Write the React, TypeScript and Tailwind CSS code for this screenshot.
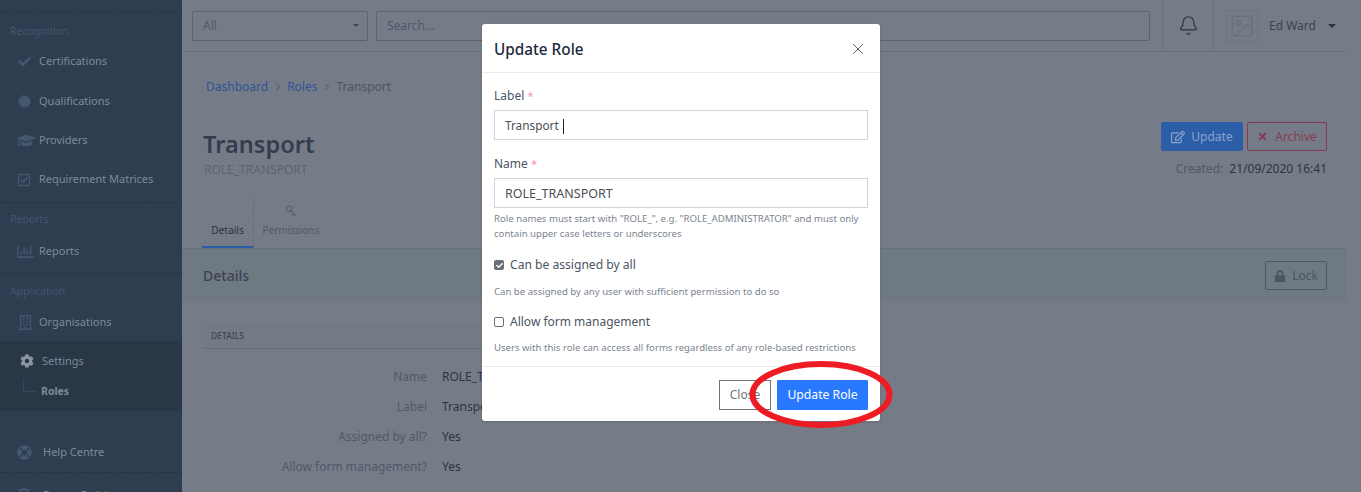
import type { ReactNode } from "react";
import { Bell, Image, X, ChevronRight, Key } from "lucide-react";
import {
  FaCheck,
  FaCertificate,
  FaGraduationCap,
  FaRegCheckSquare,
  FaRegChartBar,
  FaRegBuilding,
  FaCog,
  FaLifeRing,
  FaTrash,
  FaRegEdit,
  FaTimes,
  FaLock,
} from "react-icons/fa";

function NavHeading({ children }: { children: string }) {
  return <div className="h-[18px] pl-[10px] text-[10.5px] leading-[18px] text-[#43576e]">{children}</div>;
}

function NavItem({ icon, label }: { icon: ReactNode; label: string }) {
  return (
    <div className="flex h-[39px] items-center pl-[17px] text-[11px] text-[#7e8b99]">
      <span className="flex w-[22px] shrink-0 items-center text-[#43576e]">{icon}</span>
      {label}
    </div>
  );
}

function Row({ label, value }: { label: string; value: string }) {
  return (
    <div className="flex h-[30px] items-center text-[12px]">
      <div className="w-[225px] text-right text-[#50586a]">{label}</div>
      <div className="ml-[15px] text-[#2b3445]">{value}</div>
    </div>
  );
}

function Sidebar() {
  return (
    <aside className="h-[492px] w-[182px] shrink-0 overflow-hidden bg-[#2e3d4f]">
      <div className="mt-[12px] border-t border-dashed border-[#263343]" />
      <div className="mt-[9px]"><NavHeading>Recognition</NavHeading></div>
      <div className="mt-[2px]">
        <NavItem icon={<FaCheck size={13} className="ml-[1px]" />} label="Certifications" />
        <div className="mt-[1px]">
          <NavItem icon={<FaCertificate size={13} className="ml-[1px]" />} label="Qualifications" />
          <NavItem icon={<FaGraduationCap size={19} />} label="Providers" />
          <NavItem icon={<FaRegCheckSquare size={14} />} label="Requirement Matrices" />
        </div>
      </div>
      <div className="mt-[3px] border-t border-dashed border-[#263343]" />
      <div className="mt-[7px]"><NavHeading>Reports</NavHeading></div>
      <div className="mt-[4px]">
        <NavItem icon={<FaRegChartBar size={17} />} label="Reports" />
      </div>
      <div className="mt-[2px] border-t border-dashed border-[#263343]" />
      <div className="mt-[8px]"><NavHeading>Application</NavHeading></div>
      <div className="mt-[3px] h-[38px]">
        <NavItem icon={<FaRegBuilding size={15} className="ml-[1px]" />} label="Organisations" />
      </div>
      <div className="h-[70px] bg-[#293747] pt-[2px]">
        <div className="flex h-[36px] items-center pl-[20px] text-[11px] text-[#7e8b99]">
          <FaCog size={14} className="mr-[8px] text-[#8b95a1]" />
          Settings
        </div>
        <div className="relative mt-[1px] flex h-[24px] items-center pl-[41px] text-[10.5px] font-bold text-[#7e8b99]">
          <span className="absolute -top-[2px] left-[23px] h-[14px] w-[14px] border-b border-l border-[#36465a]" />
          Roles
        </div>
      </div>
      <div className="mt-[22px] flex h-[39px] items-center pl-[17px] text-[11px] text-[#7e8b99]">
        <FaLifeRing size={15} className="mr-[11px] text-[#43576e]" />
        Help Centre
      </div>
      <div className="border-t border-dashed border-[#263343]" />
      <div className="flex h-[44px] items-center pl-[17px] text-[11px] text-[#7e8b99]">
        <FaTrash size={14} className="mr-[12px] text-[#43576e]" />
        Report Builder
      </div>
    </aside>
  );
}

function Main() {
  return (
    <main className="flex h-[492px] min-w-0 flex-1 flex-col overflow-hidden bg-[#767c87]">
      <header className="mr-[14px] flex h-[52px] shrink-0 border-b border-[#687079]">
        <div className="flex flex-1 items-center gap-[8px] pl-[10px] pr-[12px]">
          <div className="flex h-[30px] w-[176px] items-center justify-between rounded-[2px] border border-[#5a6270] pl-[10px] pr-[8px] text-[12px] text-[#4c5a6e]">
            All
            <span className="h-0 w-0 border-x-[3.5px] border-t-[3.5px] border-x-transparent border-t-[#3d4554]" />
          </div>
          <div className="flex h-[30px] flex-1 items-center rounded-[2px] border border-[#5a6270] pl-[10px] text-[12px] text-[#4c5a6e]">Search...</div>
        </div>
        <div className="flex w-[52px] items-center justify-center border-x border-[#687079]">
          <Bell size={21} strokeWidth={1.4} className="text-[#2b3445]" />
        </div>
        <div className="flex w-[133px] items-center pl-[12px]">
          <div className="flex h-[32px] w-[32px] items-center justify-center border border-[#6e747f]">
            <Image size={26} strokeWidth={1.5} className="text-[#6a717c]" />
          </div>
          <span className="ml-[11px] text-[12px] text-[#3b4354]">Ed Ward</span>
          <span className="ml-[12px] h-0 w-0 border-x-[4px] border-t-[4px] border-x-transparent border-t-[#2b3445]" />
        </div>
      </header>
      <div className="flex h-[196px] shrink-0 flex-col">
        <div className="mt-[26px] flex items-center pl-[24px] text-[12px] leading-[18px]">
          <span className="text-[#2e5498]">Dashboard</span>
          <ChevronRight size={12} className="mx-[3.5px] text-[#4c5464]" />
          <span className="text-[#2e5498]">Roles</span>
          <ChevronRight size={12} className="mx-[3.5px] text-[#4c5464]" />
          <span className="text-[#4c5464]">Transport</span>
        </div>
        <div className="mt-[30px] flex justify-between pl-[21px] pr-[34px]">
          <div>
            <div className="text-[23.6px] font-semibold leading-[36px] text-[#343d4d]">Transport</div>
            <div className="pl-[1px] text-[12px] leading-[16px] text-[#5b6472]">ROLE_TRANSPORT</div>
          </div>
          <div className="-mt-[4px] flex flex-col items-end">
            <div className="flex gap-[4px]">
              <div className="flex h-[29px] w-[82px] items-center justify-center gap-[6px] rounded-[2px] bg-[#2c5ea8] text-[12px] text-[#8aa2c9]">
                <FaRegEdit size={14} /> Update
              </div>
              <div className="flex h-[29px] w-[80px] items-center justify-center gap-[7px] rounded-[2px] border border-[#843c52] text-[12px] text-[#843c52]">
                <FaTimes size={11} /> Archive
              </div>
            </div>
            <div className="mt-[9px] text-[12px] leading-[18px] text-[#4f5868]">
              Created: <span className="ml-[3px] text-[#2b3445]">21/09/2020 16:41</span>
            </div>
          </div>
        </div>
        <div className="mt-auto mr-[14px] flex h-[50px] pl-[20px]">
          <div className="flex w-[52px] flex-col items-center justify-end border-r border-dashed border-r-[#666d78] pb-[10px] text-[10.2px] text-[#2b3445] shadow-[inset_0_-2px_0_#2c5ea8]">Details</div>
          <div className="flex w-[74px] flex-col items-center justify-end pb-[10px] text-[10px] text-[#4f5868]">
            <Key size={12} className="mb-[6px] rotate-90 text-[#4f5868]" />
            Permissions
          </div>
        </div>
      </div>
      <div className="mr-[14px] flex h-[54px] shrink-0 items-center justify-between border-t border-[#687079] bg-[#6f7982] pl-[21px] pr-[20px]">
        <span className="text-[14px] font-medium text-[#3b4354]">Details</span>
        <div className="flex h-[29px] w-[62px] items-center justify-center gap-[6px] rounded-[2px] border border-[#4a5566] text-[12px] text-[#4a5566]">
          <FaLock size={12} /> Lock
        </div>
      </div>
      <div className="ml-[20px] mt-[21px] flex h-[26px] w-[400px] shrink-0 items-center border-b border-[#676f79] bg-[#737a84] pl-[9px] pt-[2px] text-[8.5px] font-medium text-[#3b4354]">DETAILS</div>
      <div className="mt-[13px] pl-[20px]">
        <Row label="Name" value="ROLE_TRANSPORT" />
        <Row label="Label" value="Transport" />
        <Row label="Assigned by all?" value="Yes" />
        <Row label="Allow form management?" value="Yes" />
      </div>
    </main>
  );
}

function Modal() {
  return (
    <div className="absolute left-[482px] top-[24px] flex h-[397px] w-[398px] flex-col rounded-[3px] bg-white shadow-sm">
      <div className="flex h-[49px] shrink-0 items-center justify-between border-b border-[#e9ecef] pl-[12px] pr-[13px] pt-[2px]">
        <span className="text-[15.3px] font-medium text-[#212a3a]">Update Role</span>
        <X size={18} strokeWidth={1.3} className="text-[#555b66]" />
      </div>
      <div className="flex flex-1 flex-col px-[12px]">
        <div className="mt-[14px] text-[12px] leading-[18px] text-[#4b5563]">Label <span className="text-[11px] text-[#f48fb1]">*</span></div>
        <div className="mt-[5px] flex h-[30px] items-center border border-[#ced4da] pl-[10px] pt-[2px] text-[11.8px] text-[#495057]">
          Transport <span className="ml-[4px] h-[15px] w-px bg-[#222]" />
        </div>
        <div className="mt-[15px] text-[12px] leading-[18px] text-[#4b5563]">Name <span className="text-[11px] text-[#f48fb1]">*</span></div>
        <div className="mt-[5px] flex h-[30px] items-center border border-[#ced4da] pl-[10px] pt-[3px] text-[12.5px] text-[#495057]">ROLE_TRANSPORT</div>
        <p className="mt-[3px] text-[9.6px] leading-[15px] text-[#7b8490]">
          Role names must start with "ROLE_", e.g. "ROLE_ADMINISTRATOR" and must only contain upper case letters or underscores
        </p>
        <label className="mt-[15px] flex h-[18px] items-center text-[12.1px] text-[#4b5563]">
          <span className="mr-[6px] flex h-[10px] w-[10px] items-center justify-center rounded-[2px] bg-[#6b6f76]">
            <FaCheck size={7} className="text-white" />
          </span>
          Can be assigned by all
        </label>
        <p className="mt-[10px] text-[9.6px] leading-[15px] text-[#7b8490]">Can be assigned by any user with sufficient permission to do so</p>
        <label className="mt-[14px] flex h-[18px] items-center text-[12px] text-[#4b5563]">
          <span className="mr-[6px] h-[10px] w-[10px] rounded-[2px] border border-[#6b6f76]" />
          Allow form management
        </label>
        <p className="mt-[9px] text-[9.6px] leading-[15px] text-[#7b8490]">Users with this role can access all forms regardless of any role-based restrictions</p>
      </div>
      <div className="flex h-[55px] shrink-0 items-center justify-end gap-[6px] border-t border-[#e9ecef] pr-[12px] pt-[1px]">
        <div className="flex h-[30px] w-[52px] items-center justify-center border border-[#6c757d] pt-[1px] text-[12px] text-[#6c757d]">Close</div>
        <div className="flex h-[30px] w-[91px] items-center justify-center rounded-[1px] bg-[#2979ff] pt-[1px] text-[12.2px] text-white">Update Role</div>
      </div>
    </div>
  );
}

export default function App() {
  return (
    <div className="relative flex h-[492px] w-[1361px] overflow-hidden font-['Noto_Sans','Open_Sans',sans-serif]">
      <Sidebar />
      <Main />
      <Modal />
      <svg className="absolute left-[748px] top-[359px]" width="146" height="72" viewBox="0 0 146 72">
        <ellipse cx="73" cy="35.5" rx="68.5" ry="30.5" fill="none" stroke="#ed1c24" strokeWidth="6" />
      </svg>
    </div>
  );
}
